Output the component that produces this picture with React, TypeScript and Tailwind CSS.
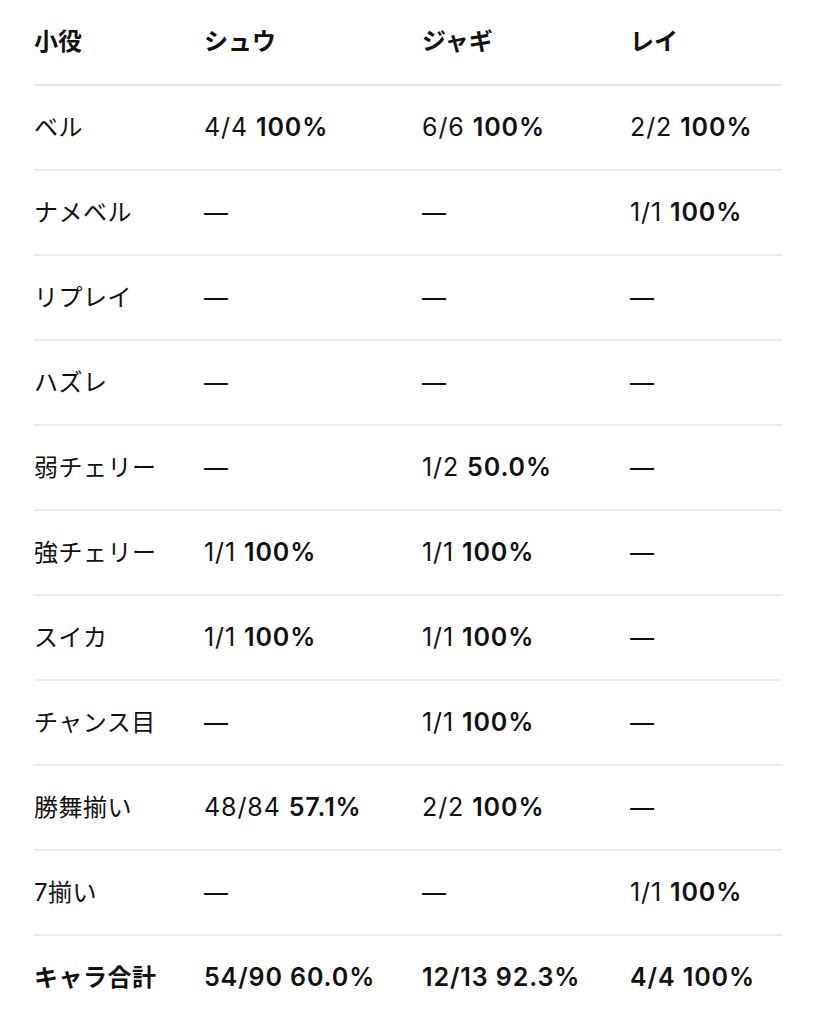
import React from "react";

type Cell = { f?: string; p?: string } | null;

const rows: { name: string; cells: Cell[] }[] = [
  { name: "ベル", cells: [{ f: "4/4", p: "100%" }, { f: "6/6", p: "100%" }, { f: "2/2", p: "100%" }] },
  { name: "ナメベル", cells: [null, null, { f: "1/1", p: "100%" }] },
  { name: "リプレイ", cells: [null, null, null] },
  { name: "ハズレ", cells: [null, null, null] },
  { name: "弱チェリー", cells: [null, { f: "1/2", p: "50.0%" }, null] },
  { name: "強チェリー", cells: [{ f: "1/1", p: "100%" }, { f: "1/1", p: "100%" }, null] },
  { name: "スイカ", cells: [{ f: "1/1", p: "100%" }, { f: "1/1", p: "100%" }, null] },
  { name: "チャンス目", cells: [null, { f: "1/1", p: "100%" }, null] },
  { name: "勝舞揃い", cells: [{ f: "48/84", p: "57.1%" }, { f: "2/2", p: "100%" }, null] },
  { name: "7揃い", cells: [null, null, { f: "1/1", p: "100%" }] },
];

const totals = ["54/90 60.0%", "12/13 92.3%", "4/4 100%"];

function Val({ c }: { c: Cell }) {
  if (!c) return <span>—</span>;
  return (
    <span className="text-[25px] tracking-[0.9px]">
      {c.f} <span className="font-semibold">{c.p}</span>
    </span>
  );
}

export default function App() {
  return (
    <div
      className="bg-white px-[34px] text-[24px] text-[#111]"
      style={{ fontFamily: 'Inter, "Noto Sans CJK JP", sans-serif' }}
    >
      <table className="w-full border-collapse table-fixed">
        <colgroup>
          <col className="w-[170px]" />
          <col className="w-[218px]" />
          <col className="w-[208px]" />
          <col />
        </colgroup>
        <thead>
          <tr className="h-[85px] border-b-2 border-[#e6e6e6]">
            <th className="text-left font-bold align-middle">小役</th>
            <th className="text-left font-bold align-middle">シュウ</th>
            <th className="text-left font-bold align-middle">ジャギ</th>
            <th className="text-left font-bold align-middle">レイ</th>
          </tr>
        </thead>
        <tbody>
          {rows.map((r) => (
            <tr key={r.name} className="h-[85px] border-b-2 border-[#ececec]">
              <td className="align-middle tracking-[0.5px]">{r.name}</td>
              {r.cells.map((c, i) => (
                <td key={i} className="align-middle">
                  <Val c={c} />
                </td>
              ))}
            </tr>
          ))}
          <tr className="h-[85px]">
            <td className="align-middle font-bold tracking-[0.5px]">キャラ合計</td>
            {totals.map((t) => (
              <td key={t} className="align-middle font-semibold text-[25px] tracking-[0.9px]">
                {t}
              </td>
            ))}
          </tr>
        </tbody>
      </table>
    </div>
  );
}
